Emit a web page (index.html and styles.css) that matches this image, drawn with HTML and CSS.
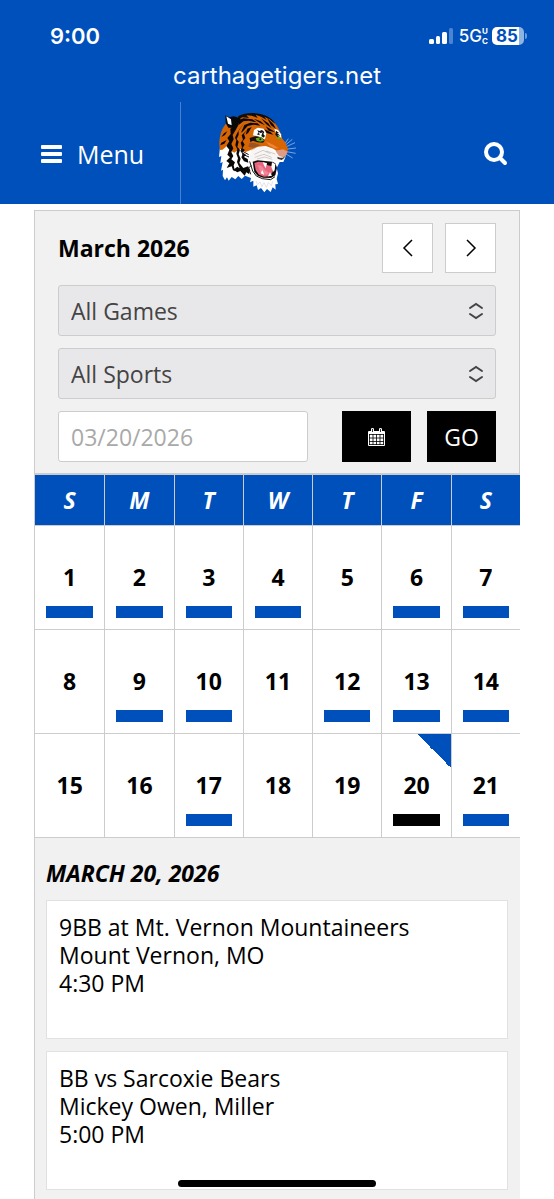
FILE: index.html
```html
<!DOCTYPE html>
<html lang="en">
<head>
    <meta charset="UTF-8">
    <meta name="viewport" content="width=device-width, initial-scale=1.0">
    <title>Carthage Tigers - Schedule</title>
    <link rel="stylesheet" href="styles.css">
</head>
<body>
    <header class="site-header">
        <div class="status-bar">
            <span class="clock">9:00</span>
            <div class="status-icons">
                <svg class="signal" width="25" height="16" viewBox="0 0 25 16" fill="#fff">
                    <rect x="0" y="11" width="5" height="5" rx="1.5"/>
                    <rect x="7" y="8" width="4" height="8" rx="1.5"/>
                    <rect x="13" y="4" width="5" height="12" rx="1.5"/>
                    <rect x="20" y="0" width="4" height="16" rx="1.5" opacity="0.3"/>
                </svg>
                <span class="network">5G</span>
                <span class="network-type"><span>U</span><span>C</span></span>
                <span class="battery">85</span>
                <span class="battery-tip"></span>
            </div>
        </div>
        <div class="address">carthagetigers.net</div>
        <nav class="nav-bar">
            <button class="menu-button" type="button">
                <svg width="21" height="18" viewBox="0 0 21 18" fill="#fff">
                    <rect y="0" width="21" height="4" rx="1"/>
                    <rect y="7" width="21" height="4" rx="1"/>
                    <rect y="14" width="21" height="4" rx="1"/>
                </svg>
                Menu
            </button>
            <a class="logo" href="#" aria-label="Home">
                <svg width="105" height="100" viewBox="0 0 315 300">
                    <!-- whiskers -->
                    <path d="M238 132L262 112M240 136L270 122M240 142L273 138M240 148L272 154M238 153L263 168M236 130L250 110" fill="none" stroke="#b9cdea" stroke-width="2"/>
                    <!-- white ruff and chin -->
                    <path d="M46 125L42 165L49 162L46 184L53 180L48 206L54 203L53 222L60 235L66 226L71 236L80 225L91 232L100 222L110 231L120 221L138 228L135 241L145 236L145 254L155 250L159 264L168 258L178 271L186 261L197 270L203 256L212 263L211 247L219 246L215 231L219 214L215 198L224 180L235 180L241 166L220 120L120 90Z" fill="#fff"/>
                    <!-- orange head -->
                    <path d="M62 66C50 80 43 103 43 126L45 144C54 145 60 138 67 128L75 145L88 152L104 140L122 150L142 142L160 134L182 132L205 140L223 153L246 154L249 140L240 120L231 109C229 93 216 67 203 56C178 38 136 33 104 42Z" fill="#d76503"/>
                    <path d="M100 42C118 33 145 31 167 36C187 41 203 51 212 66L203 60L194 52L178 44L186 55L168 44L152 38L158 48L140 41L124 40L132 48L112 46L98 54Z" fill="#160c05"/>
                    <!-- ear -->
                    <path d="M61 40L62 63L70 77L89 78L104 59L106 48L86 43L73 46Z" fill="#080808"/>
                    <path d="M64 43L78 52L80 70L69 65Z" fill="#fff"/>
                    <!-- head stripes -->
                    <g fill="#0a0806">
                        <path d="M104 62L92 69L76 80L77 96L67 108L73 118L64 132L73 143L67 158L75 166L64 177L73 184L65 198L80 193L84 205L90 208L86 190L90 181L79 172L85 162L79 150L85 139L79 126L86 112L83 99L92 84Z"/>
                        <path d="M118 62L101 85L101 98L95 111L101 119L97 135L105 143L101 157L107 170L103 183L115 198L129 193L136 205L132 216L124 211L119 221L106 207L97 211L85 203L97 194L104 199L96 180L99 169L94 155L97 142L91 130L94 115L90 107L97 92Z"/>
                        <path d="M127 83L117 96L121 108L113 118L119 128L112 139L120 144L112 151L123 158L117 165L128 171L130 182L117 178L109 166L113 157L106 146L111 136L107 122L114 113L110 100Z"/>
                        <path d="M96 55L116 49L142 52L156 61L131 56L115 58L102 68Z"/>
                        <path d="M118 69L136 62L158 64L166 71L145 68L128 72L114 88L108 92Z"/>
                        <path d="M146 50L167 58L180 70L164 62ZM168 49L190 64L200 79L184 67ZM186 48L205 66L213 81L198 70ZM182 73L202 85L210 91L191 86ZM178 82L196 90L205 98L185 93Z"/>
                        <path d="M127 80L140 75L130 92L122 98ZM57 94L67 88L60 99L49 105ZM49 122L65 114L58 125L46 130Z"/>
                    </g>
                    <!-- brow patches and eyes -->
                    <path d="M147 84L158 77L176 80L184 94L180 112L169 109L159 103L144 100Z" fill="#fff"/>
                    <path d="M157 84L161 93L155 97L164 100L162 90L168 94L173 89L169 102L175 107L180 102L175 96L178 90L171 84L163 87Z" fill="#111"/>
                    <path d="M208 80L219 84L228 97L229 110L221 105L214 98Z" fill="#fff"/>
                    <path d="M213 86L223 94L216 93L226 101L217 100L229 110L223 111L211 98Z" fill="#111"/>
                    <path d="M134 108L151 103L170 106L179 116L174 122L157 121L144 116L136 120Z" fill="#111"/>
                    <path d="M152 109L170 105L177 116L166 119L155 116Z" fill="#62ad18"/>
                    <circle cx="166" cy="112" r="3" fill="#111"/>
                    <path d="M213 109L222 103L230 109L223 112Z" fill="#62ad18"/>
                    <!-- cheek shading and muzzle -->
                    <path d="M134 122L151 124L167 130L145 137L130 134Z" fill="#995329"/>
                    <path d="M181 118L205 128L221 139L207 139L192 130Z" fill="#ed8436"/>
                    <path d="M137 149L153 138L174 134L193 139L213 152L236 153L242 162L236 175L217 176L200 176L181 171L158 178L143 180L134 170Z" fill="#f8f6f4"/>
                    <path d="M211 146L235 142L248 149L243 160L235 166L222 162Z" fill="#df9b84"/>
                    <path d="M217 164L225 167L234 167L240 161L238 168L230 174L218 170Z" fill="#333"/>
                    <path d="M138 145L151 139M148 157L174 145L196 155M149 166L177 157L200 166M156 171L179 165L202 172M183 147L211 156" fill="none" stroke="#aaa29e" stroke-width="1.5"/>
                    <!-- mouth -->
                    <path d="M143 179L158 175L180 177L202 179L211 184L216 197L211 220L198 228L174 227L158 221L148 210Z" fill="#100909"/>
                    <path d="M148 183L160 179L177 181L188 190L202 193L203 210L194 223L177 224L162 218L152 204Z" fill="#e6677d"/>
                    <path d="M158 188L170 192L180 205L192 213L184 219L167 212Z" fill="#f08799"/>
                    <path d="M173 181L186 183L182 199L177 190ZM201 181L211 186L209 205L204 210L199 194ZM167 214L172 204L178 219ZM189 223L195 210L201 221Z" fill="#fff"/>
                    <path d="M134 178L143 207L154 222L172 230L197 233L210 224M139 190L131 198L137 217M108 145L131 158M111 156L132 165" fill="none" stroke="#171717" stroke-width="3"/>
                    <path d="M153 237L158 248L165 240L171 254L177 242L184 256L190 242L199 251L203 238" fill="none" stroke="#d4d5db" stroke-width="2"/>
                </svg>
            </a>
            <button class="search-button" type="button" aria-label="Search">
                <svg width="24" height="24" viewBox="0 0 24 24" fill="none" stroke="#fff" stroke-width="4" stroke-linecap="round">
                    <circle cx="10" cy="10" r="8"/>
                    <path d="M16 16L21 21"/>
                </svg>
            </button>
        </nav>
    </header>

    <main class="schedule">
        <form class="filters" onsubmit="return false">
            <div class="month-row">
                <h1>March 2026</h1>
                <button class="arrow-button" type="button" aria-label="Previous month">
                    <svg width="12" height="20" viewBox="0 0 12 20"><path d="M10 2L2 10L10 18"/></svg>
                </button>
                <button class="arrow-button" type="button" aria-label="Next month">
                    <svg width="12" height="20" viewBox="0 0 12 20"><path d="M2 2L10 10L2 18"/></svg>
                </button>
            </div>
            <div class="select-box">
                <select aria-label="Games">
                    <option>All Games</option>
                </select>
                <svg width="16" height="18" viewBox="0 0 16 18"><path d="M2 6L8 2L14 6M2 12L8 16L14 12"/></svg>
            </div>
            <div class="select-box">
                <select aria-label="Sports">
                    <option>All Sports</option>
                </select>
                <svg width="16" height="18" viewBox="0 0 16 18"><path d="M2 6L8 2L14 6M2 12L8 16L14 12"/></svg>
            </div>
            <div class="date-row">
                <input type="text" placeholder="03/20/2026" aria-label="Date">
                <button class="black-button" type="button" aria-label="Open calendar">
                    <svg width="17" height="18" viewBox="0 0 17 18">
                        <path d="M0 4Q0 3 1 3H16Q17 3 17 4V17Q17 18 16 18H1Q0 18 0 17Z" fill="#fff"/>
                        <path d="M3 3V1Q3 0 4.500 0T6 1V3M11 3V1Q11 0 12.500 0T14 1V3" fill="#fff"/>
                        <path d="M1 6.500H16M1 10H16M1 13.500H16M1.500 6V17M5 6V17M8.500 6V17M12 6V17M15.500 6V17M1 16.500H16" stroke="#000" stroke-width="0.800"/>
                        <path d="M4.500 1V4M12.500 1V4" stroke="#000" stroke-width="0.800"/>
                    </svg>
                </button>
                <button class="black-button" type="submit">GO</button>
            </div>
        </form>

        <table class="calendar">
            <thead>
                <tr><th>S</th><th>M</th><th>T</th><th>W</th><th>T</th><th>F</th><th>S</th></tr>
            </thead>
            <tbody>
                <tr>
                    <td><a class="day has-event" href="#">1</a></td>
                    <td><a class="day has-event" href="#">2</a></td>
                    <td><a class="day has-event" href="#">3</a></td>
                    <td><a class="day has-event" href="#">4</a></td>
                    <td><a class="day" href="#">5</a></td>
                    <td><a class="day has-event" href="#">6</a></td>
                    <td><a class="day has-event" href="#">7</a></td>
                </tr>
                <tr>
                    <td><a class="day" href="#">8</a></td>
                    <td><a class="day has-event" href="#">9</a></td>
                    <td><a class="day has-event" href="#">10</a></td>
                    <td><a class="day" href="#">11</a></td>
                    <td><a class="day has-event" href="#">12</a></td>
                    <td><a class="day has-event" href="#">13</a></td>
                    <td><a class="day has-event" href="#">14</a></td>
                </tr>
                <tr>
                    <td><a class="day" href="#">15</a></td>
                    <td><a class="day" href="#">16</a></td>
                    <td><a class="day has-event" href="#">17</a></td>
                    <td><a class="day" href="#">18</a></td>
                    <td><a class="day" href="#">19</a></td>
                    <td class="today"><a class="day has-event selected" href="#">20</a></td>
                    <td><a class="day has-event" href="#">21</a></td>
                </tr>
            </tbody>
        </table>

        <section class="events">
            <h2>March 20, 2026</h2>
            <article class="event">
                <p>9BB at Mt. Vernon Mountaineers</p>
                <p>Mount Vernon, MO</p>
                <p>4:30 PM</p>
            </article>
            <article class="event">
                <p>BB vs Sarcoxie Bears</p>
                <p>Mickey Owen, Miller</p>
                <p>5:00 PM</p>
            </article>
        </section>
    </main>
    <div class="home-indicator"></div>
</body>
</html>
```
FILE: styles.css
```css
:root {
    --blue: #0050bb;
    --panel-bg: #f1f1f1;
    --border: #cccccc;
}

* {
    box-sizing: border-box;
}

body {
    font-family: 'Open Sans', sans-serif;
    font-size: 23px;
    background-color: white;
    color: black;
    margin: 0;
    min-height: 100vh;
    display: flex;
    flex-direction: column;
}

h1, h2, p {
    margin: 0;
}

button, input, select {
    font: inherit;
    border-radius: 0;
    margin: 0;
}

button {
    cursor: pointer;
}

.site-header {
    background-color: var(--blue);
    color: white;
}

/* status bar */
.status-bar {
    height: 60px;
    padding: 12px 27px 0 50px;
    display: flex;
    align-items: center;
    justify-content: space-between;
    font-family: Inter, sans-serif;
}

.clock {
    font-size: 22px;
    font-weight: 600;
}

.status-icons {
    display: flex;
    align-items: center;
}

.network {
    font-size: 17px;
    font-weight: 500;
    margin-left: 5px;
}

.network-type {
    display: flex;
    flex-direction: column;
    font-size: 8px;
    line-height: 10px;
    font-weight: 700;
}

.battery {
    width: 32px;
    height: 18px;
    margin-left: 4px;
    padding-right: 2px;
    border-radius: 5px;
    background: linear-gradient(to right, white 85%, #8fb3e2 85%);
    color: var(--blue);
    font-size: 17px;
    line-height: 18px;
    font-weight: 700;
    text-align: center;
}

.battery-tip {
    width: 2px;
    height: 6px;
    margin-left: 1px;
    border-radius: 0 2px 2px 0;
    background-color: #6e9bd8;
}

.address {
    height: 42px;
    font-family: Inter, sans-serif;
    font-size: 24px;
    line-height: 31px;
    text-align: center;
}

/* navigation */
.nav-bar {
    height: 102px;
    display: flex;
    align-items: center;
}

.menu-button {
    height: 100%;
    width: 181px;
    padding: 2px 0 0 41px;
    display: flex;
    align-items: center;
    gap: 15px;
    border: none;
    border-right: 1px solid #4781cf;
    background: none;
    color: white;
    font-size: 25px;
}

.logo {
    height: 100%;
    margin-left: 24px;
}

.search-button {
    margin-left: auto;
    padding: 2px 46px 0 0;
    border: none;
    background: none;
    display: flex;
}

/* schedule */
.schedule {
    flex: 1;
    margin: 6px 34px 0;
    border: solid var(--border);
    border-width: 1px 0 0 1px;
    background-color: var(--panel-bg);
}

.filters {
    padding: 12px 23px 11px;
    display: flex;
    flex-direction: column;
    gap: 12px;
    border: solid var(--border);
    border-width: 0 1px 2px 0;
}

.month-row {
    display: flex;
    align-items: center;
    gap: 12px;
}

.month-row h1 {
    flex: 1;
    font-size: 23px;
}

.arrow-button {
    width: 51px;
    height: 50px;
    padding: 0;
    display: flex;
    align-items: center;
    justify-content: center;
    border: 1px solid var(--border);
    background-color: white;
}

.arrow-button path {
    fill: none;
    stroke: black;
    stroke-width: 1.5;
}

.select-box {
    display: grid;
    align-items: center;
}

.select-box select,
.select-box svg {
    grid-area: 1 / 1;
}

.select-box svg {
    justify-self: end;
    margin-right: 12px;
    pointer-events: none;
}

.select-box path {
    fill: none;
    stroke: #444;
    stroke-width: 2;
    stroke-linecap: round;
}

select {
    appearance: none;
    width: 100%;
    height: 51px;
    padding: 0 12px;
    border: 1px solid var(--border);
    border-radius: 3px;
    background-color: #e8e8ea;
    color: #444;
}

.date-row {
    display: flex;
    gap: 16px;
}

.date-row input {
    flex: 1;
    min-width: 0;
    height: 51px;
    margin-right: 18px;
    padding: 0 12px;
    border: 1px solid var(--border);
    border-radius: 3px;
    background-color: white;
}

.date-row input::placeholder {
    color: #a9a9a9;
}

.black-button {
    width: 69px;
    height: 51px;
    padding: 0;
    display: flex;
    align-items: center;
    justify-content: center;
    border: none;
    background-color: black;
    color: white;
}

/* calendar */
.calendar {
    width: 100%;
    table-layout: fixed;
    border-collapse: separate;
    border-spacing: 0;
    background-color: white;
    font-weight: bold;
    text-align: center;
}

.calendar th,
.calendar td {
    padding: 0;
    border: solid var(--border);
    border-width: 0 0 1px 1px;
}

.calendar th:first-child,
.calendar td:first-child {
    border-left: none;
}

.calendar th {
    height: 51px;
    background-color: var(--blue);
    color: white;
    font-style: italic;
}

.calendar td {
    height: 104px;
}

.day {
    height: 103px;
    padding: 36px 11px 11px;
    display: flex;
    flex-direction: column;
    justify-content: space-between;
    line-height: 30px;
    color: black;
    text-decoration: none;
}

.has-event::after {
    content: "";
    height: 12px;
    background-color: var(--blue);
}

.selected::after {
    background-color: black;
}

.today {
    background: linear-gradient(to bottom left, var(--blue) 50%, transparent 50%) top right / 34px 34px no-repeat;
}

/* events */
.events {
    padding: 20px 12px 12px 11px;
    display: flex;
    flex-direction: column;
    gap: 12px;
}

.events h2 {
    font-size: 23px;
    line-height: 30px;
    font-style: italic;
    text-transform: uppercase;
}

.event {
    min-height: 139px;
    padding: 12px;
    border: 1px solid #e1e1e1;
    background-color: white;
    line-height: 28px;
}

.home-indicator {
    position: fixed;
    bottom: 12px;
    left: 50%;
    width: 198px;
    height: 7px;
    margin-left: -99px;
    border-radius: 4px;
    background-color: black;
}
```
